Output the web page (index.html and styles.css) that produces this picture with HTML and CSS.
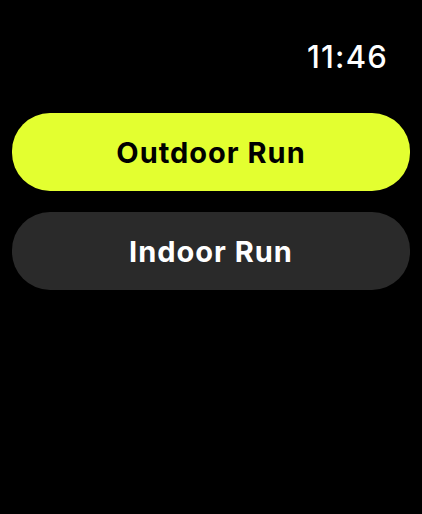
FILE: index.html
```html
<!DOCTYPE html>
<html>
<head>
<meta charset="utf-8">
<link rel="stylesheet" href="styles.css">
</head>
<body>
<div class="screen">
  <div class="status"><span class="time">11:46</span></div>
  <div class="list">
    <div class="btn btn-outdoor">Outdoor Run</div>
    <div class="btn btn-indoor">Indoor Run</div>
  </div>
</div>
</body>
</html>
```

FILE: styles.css
```css
html, body {
  margin: 0;
  padding: 0;
  background: #000;
}
.screen {
  width: 422px;
  height: 514px;
  background: #000;
  font-family: Inter, "Noto Sans", sans-serif;
  box-sizing: border-box;
  padding: 0 12px;
}
.status {
  display: flex;
  justify-content: flex-end;
  height: 113px;
  padding-right: 22px;
  box-sizing: border-box;
  padding-top: 37px;
}
.time {
  color: #fff;
  font-size: 31px;
  line-height: 40px;
  font-weight: 500;
  letter-spacing: 1.2px;
  height: 40px;
}
.list {
  display: flex;
  flex-direction: column;
  gap: 21px;
}
.btn {
  height: 78px;
  border-radius: 38px;
  display: flex;
  align-items: center;
  justify-content: center;
  font-size: 29px;
  font-weight: 700;
  letter-spacing: 1px;
}
.btn-outdoor {
  background: #e3ff30;
  color: #000;
}
.btn-indoor {
  background: #2a2a2a;
  color: #fff;
}
```
